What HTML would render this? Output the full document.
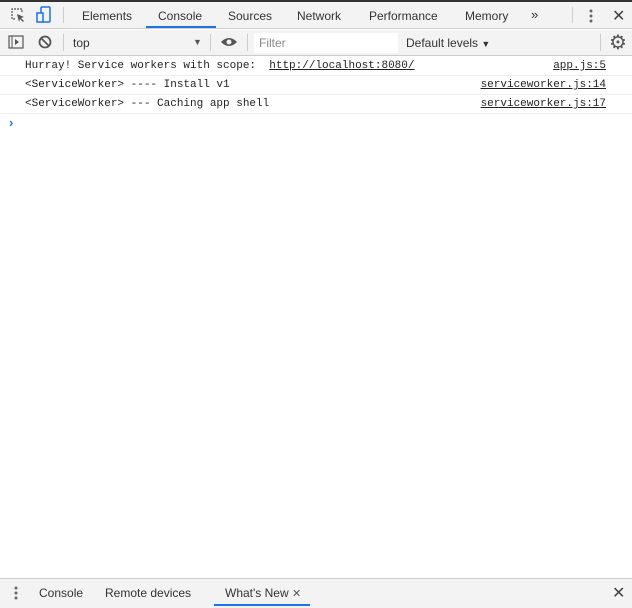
<!DOCTYPE html>
<html><head><style>
*{margin:0;padding:0;box-sizing:border-box}
body{width:632px;height:608px;background:#fff;font-family:"Liberation Sans",sans-serif;font-size:12px;color:#333;position:relative;overflow:hidden}
.abs{position:absolute}
.mono{font-family:"Liberation Mono",monospace;font-size:11px;color:#222}
u{text-decoration:underline}
</style></head><body>
<div class="abs" style="left:0;top:0;width:632px;height:2px;background:#333"></div>
<div class="abs" style="left:0;top:2px;width:632px;height:27px;background:#f3f3f3;border-bottom:1px solid #ccc"></div>
<svg class="abs" style="left:10px;top:7px" width="16" height="16" viewBox="0 0 16 16"><path d="M5 12H2V2h10v3" fill="none" stroke="#555" stroke-width="1.2" stroke-dasharray="2 1"/><path d="M7 7l7 3-3 1 3 3-1 1-3-3-1 3z" fill="#555"/></svg>
<svg class="abs" style="left:36px;top:6px" width="16" height="18" viewBox="0 0 16 18"><rect x="5" y="1" width="9" height="15" rx="1" fill="none" stroke="#1a73e8" stroke-width="1.5"/><rect x="1" y="7" width="6" height="9" fill="#f3f3f3" stroke="#1a73e8" stroke-width="1.5"/></svg>
<div class="abs" style="left:63px;top:7px;width:1px;height:16px;background:#ccc"></div>
<div class="abs" style="left:82px;top:9px">Elements</div>
<div class="abs" style="left:158px;top:9px;color:#333">Console</div>
<div class="abs" style="left:146px;top:26px;width:70px;height:2px;background:#1a73e8"></div>
<div class="abs" style="left:228px;top:9px">Sources</div>
<div class="abs" style="left:297px;top:9px">Network</div>
<div class="abs" style="left:369px;top:9px">Performance</div>
<div class="abs" style="left:465px;top:9px">Memory</div>
<div class="abs" style="left:531px;top:7px;font-size:13px">»</div>
<div class="abs" style="left:572px;top:7px;width:1px;height:16px;background:#ccc"></div>
<svg class="abs" style="left:587px;top:8px" width="8" height="16"><circle cx="4" cy="3" r="1.5" fill="#666"/><circle cx="4" cy="8" r="1.5" fill="#666"/><circle cx="4" cy="13" r="1.5" fill="#666"/></svg>
<div class="abs" style="left:612px;top:6px;font-size:16px;color:#444">✕</div>
<div class="abs" style="left:0;top:30px;width:632px;height:26px;background:#f3f3f3;border-bottom:1px solid #ccc"></div>
<svg class="abs" style="left:8px;top:35px" width="16" height="14"><rect x="1" y="1" width="14" height="12" fill="none" stroke="#555" stroke-width="1.2"/><line x1="4" y1="1" x2="4" y2="13" stroke="#555"/><path d="M7 4l4 3-4 3z" fill="#555"/></svg>
<svg class="abs" style="left:38px;top:35px" width="14" height="14"><circle cx="7" cy="7" r="5.5" fill="none" stroke="#555" stroke-width="1.8"/><line x1="3" y1="3" x2="11" y2="11" stroke="#555" stroke-width="1.8"/></svg>
<div class="abs" style="left:63px;top:34px;width:1px;height:17px;background:#ccc"></div>
<div class="abs" style="left:73px;top:36px">top</div>
<div class="abs" style="left:193px;top:37px;font-size:9px;color:#555">▼</div>
<div class="abs" style="left:210px;top:34px;width:1px;height:17px;background:#ccc"></div>
<svg class="abs" style="left:220px;top:36px" width="18" height="12"><path d="M1 6Q9-2 17 6Q9 14 1 6z" fill="#555"/><circle cx="9" cy="6" r="2.5" fill="#f3f3f3"/></svg>
<div class="abs" style="left:247px;top:34px;width:1px;height:17px;background:#ccc"></div>
<div class="abs" style="left:254px;top:33px;width:144px;height:20px;background:#fff"></div>
<div class="abs" style="left:259px;top:36px;color:#888">Filter</div>
<div class="abs" style="left:406px;top:36px">Default levels <span style="font-size:9px">▼</span></div>
<div class="abs" style="left:600px;top:34px;width:1px;height:17px;background:#ccc"></div>
<div class="abs" style="left:609px;top:30px;font-size:20px;color:#555">⚙</div>
<div class="abs mono" style="left:25px;top:60px;white-space:pre">Hurray! Service workers with scope:  <u>http://localhost:8080/</u></div>
<div class="abs mono" style="right:26px;top:60px"><u>app.js:5</u></div>
<div class="abs" style="left:0;top:75px;width:632px;height:1px;background:#eee"></div>
<div class="abs mono" style="left:25px;top:79px;white-space:pre">&lt;ServiceWorker&gt; ---- Install v1</div>
<div class="abs mono" style="right:26px;top:79px"><u>serviceworker.js:14</u></div>
<div class="abs" style="left:0;top:94px;width:632px;height:1px;background:#eee"></div>
<div class="abs mono" style="left:25px;top:98px;white-space:pre">&lt;ServiceWorker&gt; --- Caching app shell</div>
<div class="abs mono" style="right:26px;top:98px"><u>serviceworker.js:17</u></div>
<div class="abs" style="left:0;top:113px;width:632px;height:1px;background:#eee"></div>
<div class="abs" style="left:9px;top:115px;color:#1a73e8;font-size:13px;font-weight:bold">›</div>
<div class="abs" style="left:0;top:578px;width:632px;height:30px;background:#f3f3f3;border-top:1px solid #ccc"></div>
<svg class="abs" style="left:12px;top:585px" width="8" height="16"><circle cx="4" cy="3" r="1.5" fill="#666"/><circle cx="4" cy="8" r="1.5" fill="#666"/><circle cx="4" cy="13" r="1.5" fill="#666"/></svg>
<div class="abs" style="left:39px;top:586px">Console</div>
<div class="abs" style="left:105px;top:586px">Remote devices</div>
<div class="abs" style="left:225px;top:586px">What's New <span style="font-size:11px;color:#555">✕</span></div>
<div class="abs" style="left:214px;top:604px;width:96px;height:2px;background:#1a73e8"></div>
<div class="abs" style="left:612px;top:583px;font-size:16px;color:#444">✕</div>
</body></html>
